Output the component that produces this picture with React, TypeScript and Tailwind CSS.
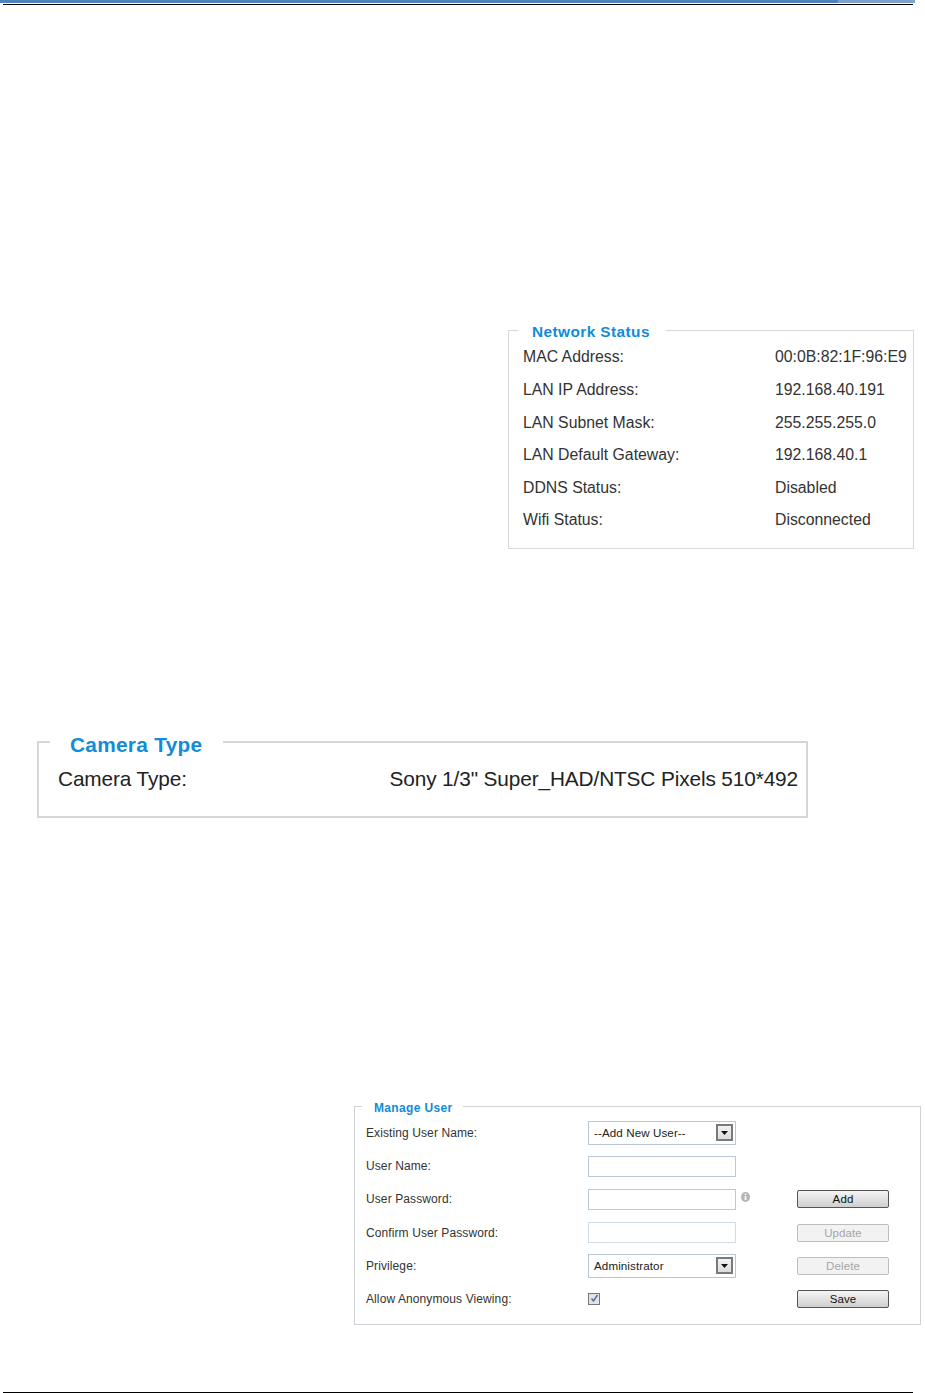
const ROWS: [string, string][] = [
  ["MAC Address:", "00:0B:82:1F:96:E9"],
  ["LAN IP Address:", "192.168.40.191"],
  ["LAN Subnet Mask:", "255.255.255.0"],
  ["LAN Default Gateway:", "192.168.40.1"],
  ["DDNS Status:", "Disabled"],
  ["Wifi Status:", "Disconnected"],
];

function Arrow() {
  return (
    <div className="flex h-[17px] w-[17px] items-center justify-center border-2 border-[#7a7a7a] bg-gradient-to-b from-[#f2f2f2] to-[#dcdcdc]">
      <svg width="7" height="4" viewBox="0 0 7 4"><path d="M0 0h7L3.5 4z" fill="#111" /></svg>
    </div>
  );
}

function Select({ value }: { value: string }) {
  return (
    <div className="flex h-[24px] w-[148px] items-center justify-between border border-[#b9c6d6] bg-white pl-[5px] pr-[2px] text-[11.6px] text-[#222]">
      <span>{value}</span>
      <Arrow />
    </div>
  );
}

function Field({ faint }: { faint?: boolean }) {
  return <input className={`block h-[21px] w-[148px] border bg-white ${faint ? "border-[#d3dbe5]" : "border-[#bcc8d8]"}`} />;
}

function Btn({ label, disabled }: { label: string; disabled?: boolean }) {
  return (
    <button
      className={
        disabled
          ? "block h-[18px] w-[92px] rounded-[2px] border border-[#bdbdbd] bg-[#f2f2f2] text-[11.5px] leading-[16px] text-[#a6a6a6]"
          : "block h-[18px] w-[92px] rounded-[2px] border border-[#555] bg-gradient-to-b from-[#f5f5f5] via-[#e2e2e2] to-[#cfcfcf] text-[11.5px] leading-[16px] text-[#111]"
      }
    >
      {label}
    </button>
  );
}

function MRow({ label, control, side }: { label: string; control: React.ReactNode; side?: React.ReactNode }) {
  return (
    <div className="grid h-[33.2px] grid-cols-[222px_148px_61px_92px] items-center">
      <span>{label}</span>
      {control}
      <span />
      {side ?? <span />}
    </div>
  );
}

export default function App() {
  return (
    <div className="flex h-[1393px] w-[925px] flex-col overflow-hidden bg-white font-['Liberation_Sans',Arial,sans-serif]">
      <div className="flex h-[3px] w-[915px]">
        <div className="flex-1 bg-[#4f81bd]" />
        <div className="w-[77px] bg-[#7da2cf]" />
      </div>
      <div className="ml-[3px] mt-px h-px w-[910px] bg-black" />

      <fieldset className="ml-[508px] mt-[313px] h-[231px] w-[406px] border border-[#d9d9d9]">
        <legend className="ml-[9px] box-border h-[24px] pl-[14px] pr-[16px] pt-[4px] text-[15.4px] font-bold leading-[20px] tracking-[0.42px] text-[#128bd8]">Network Status</legend>
        <div className="-mt-px grid auto-rows-[32.6px] grid-cols-[252px_1fr] items-center pl-[14px] text-[15.8px] text-[#333]">
          {ROWS.map(([k, v]) => (
            <div key={k} className="contents">
              <span>{k}</span>
              <span className="whitespace-nowrap">{v}</span>
            </div>
          ))}
        </div>
      </fieldset>

      <fieldset className="ml-[37px] mt-[177px] h-[92px] w-[771px] border-2 border-[#d6d6d6]">
        <legend className="ml-[11px] box-border h-[32px] pl-[20px] pr-[21px] pt-[6px] text-[20.8px] font-bold leading-[26px] tracking-[0.3px] text-[#128bd8]">Camera Type</legend>
        <div className="flex items-center justify-between pl-[19px] pr-[8px] pt-[8px] text-[20.8px] leading-[26px] tracking-[-0.12px] text-[#222]">
          <span>Camera Type:</span>
          <span>Sony 1/3" Super_HAD/NTSC Pixels 510*492</span>
        </div>
      </fieldset>

      <fieldset className="ml-[354px] mt-[278px] h-[229px] w-[567px] border border-[#cfd2d6]">
        <legend className="ml-[7px] box-border h-[20px] pl-[12px] pr-[10px] pt-[4px] text-[12px] font-bold leading-[16px] tracking-[0.35px] text-[#128bd8]">Manage User</legend>
        <div className="flex flex-col pl-[11px] pt-[0.4px] text-[12px] tracking-[0.1px] text-[#333]">
          <MRow label="Existing User Name:" control={<Select value="--Add New User--" />} />
          <MRow label="User Name:" control={<Field />} />
          <MRow
            label="User Password:"
            control={
              <div className="relative">
                <Field />
                <svg className="absolute left-[153px] top-[3px]" width="9" height="10" viewBox="0 0 9 10">
                  <ellipse cx="4.5" cy="5" rx="4.5" ry="5" fill="#b5b5b5" />
                  <rect x="3.7" y="1.6" width="1.6" height="1.4" fill="#fff" />
                  <rect x="3.7" y="4" width="1.6" height="4" fill="#fff" />
                </svg>
              </div>
            }
            side={<Btn label="Add" />}
          />
          <MRow label="Confirm User Password:" control={<Field faint />} side={<Btn label="Update" disabled />} />
          <MRow label="Privilege:" control={<Select value="Administrator" />} side={<Btn label="Delete" disabled />} />
          <MRow
            label="Allow Anonymous Viewing:"
            control={
              <div className="flex h-[12px] w-[12px] items-center justify-center border border-[#777] bg-[#dfe4ec]">
                <svg width="9" height="9" viewBox="0 0 9 9"><path d="M1.5 4.5l2 2.5 4-6" fill="none" stroke="#5a6f96" strokeWidth="1.5" /></svg>
              </div>
            }
            side={<Btn label="Save" />}
          />
        </div>
      </fieldset>

      <div className="ml-[3px] mt-auto h-px w-[910px] bg-black" />
    </div>
  );
}
